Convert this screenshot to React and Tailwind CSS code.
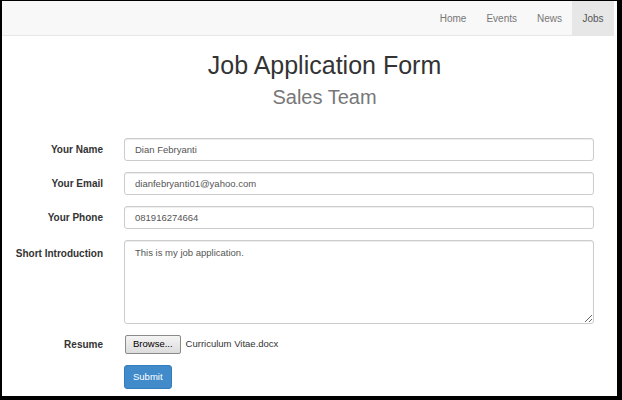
import React from 'react';

const navItems = ['Home', 'Events', 'News', 'Jobs'];

const Field = ({ label, children, top = false }) => (
  <div className={`flex ${top ? 'items-start' : 'items-center'}`}>
    <label
      className={`w-[101px] shrink-0 text-right text-[10px] font-bold text-[#333] ${top ? 'pt-[6px]' : ''}`}
    >
      {label}
    </label>
    <div className="ml-[21px] flex-1">{children}</div>
  </div>
);

const inputCls =
  'block w-full h-[23px] rounded-[3px] border border-[#ccc] bg-white px-[10px] text-[9.5px] text-[#555] shadow-[inset_0_1px_1px_rgba(0,0,0,0.075)] outline-none';

export default function App() {
  return (
    <div
      className="w-[622px] h-[400px] overflow-hidden bg-black"
      style={{ fontFamily: '"Liberation Sans", Arial, sans-serif' }}
    >
      <div className="ml-[2px] mt-[1px] w-[615px] h-[395px] bg-white flex flex-col">
        {/* navbar */}
        <nav className="h-[35px] mr-[3px] bg-[#f8f8f8] border-b border-[#e7e7e7] flex justify-end">
          <ul className="flex h-full text-[10px] text-[#777]">
            {navItems.map((item) => (
              <li
                key={item}
                className={`flex items-center px-[10px] ${
                  item === 'Jobs' ? 'bg-[#e7e7e7] text-[#555] w-[42px] justify-center' : ''
                }`}
              >
                {item}
              </li>
            ))}
          </ul>
        </nav>

        {/* heading */}
        <div className="text-center mt-[14px] pl-[30px]">
          <h1 className="text-[25px] leading-[30px] text-[#333]">Job Application Form</h1>
          <h2 className="text-[20px] leading-[24px] mt-[5px] text-[#777]">Sales Team</h2>
        </div>

        {/* form */}
        <form className="mt-[29px] mr-[23px] flex flex-col gap-[11px]">
          <Field label="Your Name">
            <input className={inputCls} defaultValue="Dian Febryanti" />
          </Field>
          <Field label="Your Email">
            <input className={inputCls} defaultValue="dianfebryanti01@yahoo.com" />
          </Field>
          <Field label="Your Phone">
            <input className={inputCls} defaultValue="081916274664" />
          </Field>
          <Field label="Short Introduction" top>
            <textarea
              className="block w-full h-[84px] resize-y rounded-[3px] border border-[#ccc] bg-white px-[10px] py-[5px] text-[9.5px] text-[#555] shadow-[inset_0_1px_1px_rgba(0,0,0,0.075)] outline-none"
              defaultValue="This is my job application."
            />
          </Field>
          <div className="flex items-center">
            <span className="w-[101px] shrink-0 text-right text-[10px] font-bold text-[#333]">
              Resume
            </span>
            <div className="ml-[22px] flex items-center gap-[5px]">
              <span className="h-[19px] px-[7px] flex items-center border border-[#8a8a8a] rounded-[2px] bg-gradient-to-b from-[#f4f4f4] to-[#dcdcdc] text-[9.5px] text-black">
                Browse...
              </span>
              <span className="text-[9.5px] text-[#333]">Curriculum Vitae.docx</span>
            </div>
          </div>
          <div className="flex">
            <div className="w-[101px] shrink-0" />
            <button
              type="button"
              className="ml-[21px] h-[24px] px-[8px] rounded-[3px] bg-[#428bca] border border-[#357ebd] text-white text-[9.5px]"
            >
              Submit
            </button>
          </div>
        </form>
      </div>
    </div>
  );
}
